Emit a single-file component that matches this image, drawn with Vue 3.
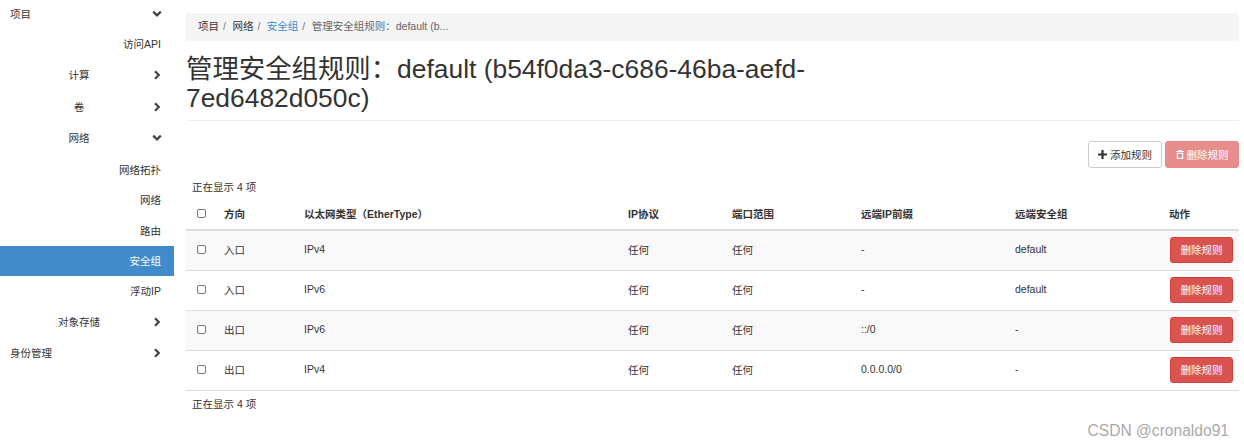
<script setup>
// sidebar rows: level 0 = left, 1 = centred, 2 = right aligned
const menu = [
  { label: '项目', level: 0, h: 28, arrow: 'down' },
  { label: '访问API', level: 2, h: 31 },
  { label: '计算', level: 1, h: 32, arrow: 'right' },
  { label: '卷', level: 1, h: 31, arrow: 'right' },
  { label: '网络', level: 1, h: 32, arrow: 'down' },
  { label: '网络拓扑', level: 2, h: 31 },
  { label: '网络', level: 2, h: 30 },
  { label: '路由', level: 2, h: 31 },
  { label: '安全组', level: 2, h: 30, active: true },
  { label: '浮动IP', level: 2, h: 29 },
  { label: '对象存储', level: 1, h: 33, arrow: 'right' },
  { label: '身份管理', level: 0, h: 30, arrow: 'right' }
]

const columns = ['方向', '以太网类型（EtherType）', 'IP协议', '端口范围', '远端IP前缀', '远端安全组', '动作']

const rules = [
  { dir: '入口', type: 'IPv4', proto: '任何', port: '任何', prefix: '-', group: 'default' },
  { dir: '入口', type: 'IPv6', proto: '任何', port: '任何', prefix: '-', group: 'default' },
  { dir: '出口', type: 'IPv6', proto: '任何', port: '任何', prefix: '::/0', group: '-' },
  { dir: '出口', type: 'IPv4', proto: '任何', port: '任何', prefix: '0.0.0.0/0', group: '-' }
]
</script>

<template>
  <div class="page">
    <aside class="sidebar">
      <div
        v-for="(item, i) in menu"
        :key="i"
        class="nav-row"
        :class="['level-' + item.level, { active: item.active }]"
        :style="{ height: item.h + 'px' }"
      >
        <span class="nav-label">{{ item.label }}</span>
        <svg v-if="item.arrow === 'down'" class="chevron" width="10" height="8" viewBox="0 0 10 8">
          <path d="M1.2 1.6 5 5.4 8.8 1.6" fill="none" stroke="#444" stroke-width="2.2" />
        </svg>
        <svg v-if="item.arrow === 'right'" class="chevron" width="10" height="10" viewBox="0 0 10 10">
          <path d="M3 1.2 6.8 5 3 8.8" fill="none" stroke="#444" stroke-width="2.2" />
        </svg>
      </div>
    </aside>

    <main class="content">
      <ol class="breadcrumb">
        <li>项目</li>
        <li>网络</li>
        <li class="link">安全组</li>
        <li class="current">管理安全组规则：default (b...</li>
      </ol>

      <div class="page-header">
        <h1>管理安全组规则：default (b54f0da3-c686-46ba-aefd-7ed6482d050c)</h1>
      </div>

      <div class="actions">
        <button class="btn btn-default">
          <svg width="9" height="9" viewBox="0 0 9 9"><path d="M3.4 0h2.2v3.4H9v2.2H5.6V9H3.4V5.6H0V3.4h3.4z" fill="#333" /></svg>
          添加规则
        </button>
        <button class="btn btn-disabled">
          <svg width="8" height="9" viewBox="0 0 8 9"><path d="M2.6 0h2.8l.4 1H8v1H0V1h2.2zM.8 2.8h6.4V9H.8zM2 4v3.8h4V4z" fill="#fff" fill-rule="evenodd" /></svg>
          删除规则
        </button>
      </div>

      <div class="count">正在显示 4 项</div>

      <table class="rules">
        <thead>
          <tr>
            <th><input type="checkbox" /></th>
            <th v-for="col in columns" :key="col">{{ col }}</th>
          </tr>
        </thead>
        <tbody>
          <tr v-for="(rule, i) in rules" :key="i">
            <td><input type="checkbox" /></td>
            <td>{{ rule.dir }}</td>
            <td>{{ rule.type }}</td>
            <td>{{ rule.proto }}</td>
            <td>{{ rule.port }}</td>
            <td>{{ rule.prefix }}</td>
            <td>{{ rule.group }}</td>
            <td><button class="btn btn-danger">删除规则</button></td>
          </tr>
        </tbody>
      </table>

      <div class="count bottom">正在显示 4 项</div>
    </main>

    <div class="watermark">CSDN @cronaldo91</div>
  </div>
</template>

<style scoped>
.page {
  position: relative;
  display: flex;
  width: 1244px;
  height: 446px;
  overflow: hidden;
  background: #fff;
  color: #333;
  font-family: "Liberation Sans", "Noto Sans CJK SC", sans-serif;
  font-size: 10.5px;
}
.sidebar {
  width: 174px;
  flex-shrink: 0;
}
.nav-row {
  position: relative;
  display: flex;
  align-items: center;
  box-sizing: border-box;
  padding-bottom: 1px;
}
.level-0 {
  padding-left: 10px;
}
.level-1 {
  justify-content: center;
  padding-right: 16px;
}
.level-2 {
  justify-content: flex-end;
  padding-right: 13px;
}
.active {
  background: #428bca;
  color: #fff;
}
.chevron {
  position: absolute;
  left: 152px;
  top: 50%;
  transform: translateY(-50%);
}
.content {
  width: 1053px;
  margin-left: 12px;
  padding-top: 13px;
}
.breadcrumb {
  display: flex;
  align-items: center;
  box-sizing: border-box;
  height: 28px;
  margin: 0;
  padding: 0 12px 3px;
  list-style: none;
  background: #f5f5f5;
  border-radius: 3px;
}
.breadcrumb li + li::before {
  content: "/";
  padding: 0 6.5px 0 4px;
  color: #777;
}
.breadcrumb .link {
  color: #428bca;
}
.breadcrumb .current {
  color: #666;
}
.page-header {
  height: 80px;
  box-sizing: border-box;
  border-bottom: 1px solid #eee;
}
h1 {
  max-width: 640px;
  margin: 0;
  padding-top: 14px;
  font-size: 26.4px;
  font-weight: 400;
  line-height: 29px;
}
.actions {
  display: flex;
  justify-content: flex-end;
  gap: 3px;
  margin-top: 20px;
}
.btn {
  display: inline-flex;
  align-items: center;
  justify-content: center;
  gap: 3px;
  box-sizing: border-box;
  padding: 0 0 1px;
  border-radius: 3px;
  font-family: inherit;
  font-size: 10.5px;
}
.actions .btn {
  width: 74px;
  height: 27px;
}
.btn-default {
  background: #fff;
  border: 1px solid #ccc;
  color: #333;
}
.btn-disabled {
  background: #e78e8c;
  border: 1px solid #e58a87;
  color: #fff;
}
.btn-danger {
  width: 63px;
  height: 26px;
  margin-left: 1px;
  background: #d9534f;
  border: 1px solid #d43f3a;
  color: #fff;
}
.count {
  margin-top: 12px;
  padding-left: 6px;
  line-height: 14px;
}
.count.bottom {
  margin-top: 6px;
}
.rules {
  width: 1053px;
  margin-top: 5px;
  table-layout: fixed;
  border-collapse: collapse;
}
.rules th:nth-child(1) { width: 32px; }
.rules th:nth-child(2) { width: 80px; }
.rules th:nth-child(3) { width: 324px; }
.rules th:nth-child(4) { width: 104px; }
.rules th:nth-child(5) { width: 129px; }
.rules th:nth-child(6) { width: 154px; }
.rules th:nth-child(7) { width: 154px; }
.rules th:nth-child(8) { width: 76px; }
.rules th {
  box-sizing: border-box;
  height: 31px;
  padding: 0 6px 2px;
  text-align: left;
  font-weight: 700;
  border-bottom: 2px solid #ddd;
}
.rules td {
  box-sizing: border-box;
  height: 40px;
  padding: 0 6px 2px;
  border-bottom: 1px solid #ddd;
}
.rules td:last-child {
  padding-bottom: 0;
}
.rules tbody tr:nth-child(odd) {
  background: #f9f9f9;
}
input[type="checkbox"] {
  display: block;
  width: 9px;
  height: 9px;
  margin: 1px 0 0 5px;
  appearance: none;
  background: #fff;
  border: 1px solid #767676;
  border-radius: 2px;
}
.watermark {
  position: absolute;
  right: 15px;
  top: 422px;
  color: #a9a9a9;
  font-size: 15.6px;
  line-height: 18px;
}
</style>
